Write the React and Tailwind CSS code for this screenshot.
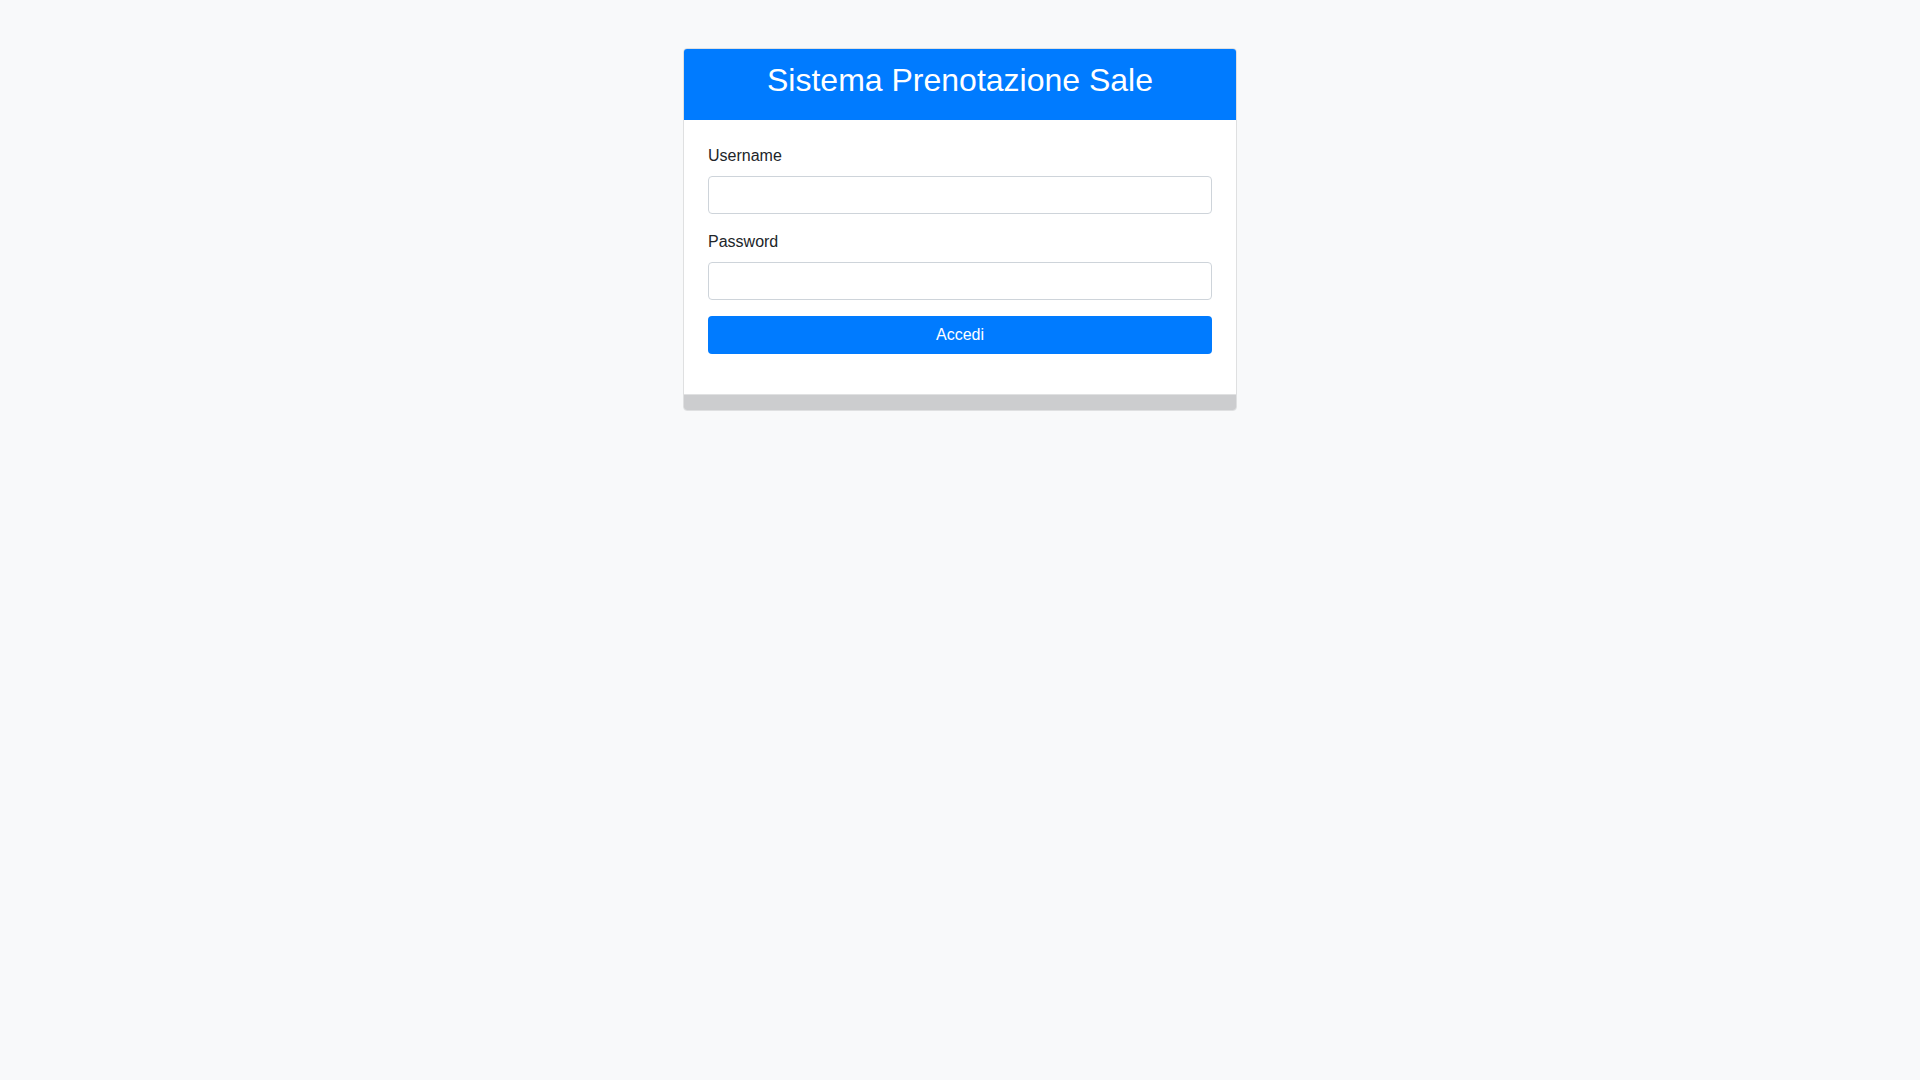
import React, { useState } from "react";

export default function App() {
  const [username, setUsername] = useState("");
  const [password, setPassword] = useState("");

  return (
    <div className="min-h-screen bg-[#f8f9fa] font-['Liberation_Sans',Arial,sans-serif] text-[#212529] text-base">
      <div className="flex justify-center pt-12">
        <div className="w-[554px] border border-[#dfe0e1] rounded bg-white overflow-hidden">
          {/* Header */}
          <div className="bg-[#007bff] px-5 pt-3 pb-[21px] text-center">
            <h2 className="text-[32px] leading-[1.2] text-white font-normal">Sistema Prenotazione Sale</h2>
          </div>

          {/* Body */}
          <form className="p-6" onSubmit={(e) => e.preventDefault()}>
            <div className="mb-4">
              <label className="block mb-2 leading-6">Username</label>
              <input
                type="text"
                value={username}
                onChange={(e) => setUsername(e.target.value)}
                className="block w-full h-[38px] px-3 border border-[#ced4da] rounded bg-white outline-none"
              />
            </div>
            <div className="mb-4">
              <label className="block mb-2 leading-6">Password</label>
              <input
                type="password"
                value={password}
                onChange={(e) => setPassword(e.target.value)}
                className="block w-full h-[38px] px-3 border border-[#ced4da] rounded bg-white outline-none"
              />
            </div>
            <div className="mb-4">
              <button
                type="submit"
                className="w-full h-[38px] rounded bg-[#007bff] text-white leading-6 cursor-pointer"
              >
                Accedi
              </button>
            </div>
          </form>

          {/* Footer */}
          <div className="h-4 bg-[#cccdcf] border-t border-[#e0e1e2]" />
        </div>
      </div>
    </div>
  );
}
